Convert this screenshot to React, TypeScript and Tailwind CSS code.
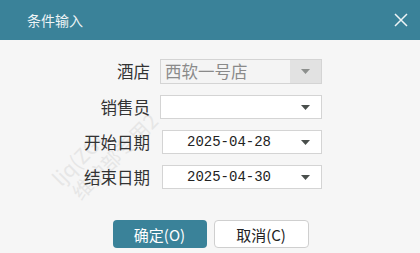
import React from "react";

const Arrow = () => (
  <svg width="9" height="5" viewBox="0 0 9 5" className="shrink-0">
    <path d="M0 0 H9 L4.5 5 Z" fill="#4a4f4c" />
  </svg>
);

const Label = ({ children }: { children: React.ReactNode }) => (
  <div className="w-[90px] text-right text-[16.5px] text-[#333] leading-none pr-[10px]">{children}</div>
);

export default function App() {
  const font = { fontFamily: '"Noto Sans CJK SC", "Noto Sans", sans-serif' };
  return (
    <div className="w-[420px] h-[253px] bg-[#f6f6f6] flex flex-col relative overflow-hidden" style={font}>
      <div className="h-[40px] bg-[#3a8299] flex items-center justify-between pl-[27px] pr-[12px] shrink-0">
        <span className="text-[14px] text-[#eef4f6] leading-none">条件输入</span>
        <svg width="14" height="14" viewBox="0 0 14 14">
          <path d="M1 1 L13 13 M13 1 L1 13" stroke="#eef4f6" strokeWidth="1.5" />
        </svg>
      </div>

      <div className="pointer-events-none absolute left-[64px] top-[166px] -rotate-45 origin-left text-[20px] leading-[24px] whitespace-nowrap text-[#e6e6e6]">
        <div>ljq(ZG)</div>
        <div className="pl-[4px]">维护部专用2</div>
      </div>

      <div className="relative flex flex-col pl-[70px] pt-[19px] gap-[11px]">
        <div className="flex items-center h-[25px]">
          <Label>酒店</Label>
          <div className="w-[162px] h-[25px] border border-[#d4d4d4] bg-[#f4f4f4] flex items-stretch">
            <div className="flex-1 flex items-center pl-[4px] text-[16.5px] text-[#8a8a8a] leading-none">西软一号店</div>
            <div className="w-[31px] bg-[#e2e2e2] flex items-center justify-center">
              <svg width="9" height="5" viewBox="0 0 9 5"><path d="M0 0 H9 L4.5 5 Z" fill="#8c8f8d" /></svg>
            </div>
          </div>
        </div>
        <div className="flex items-center h-[24px]">
          <Label>销售员</Label>
          <div className="w-[162px] h-[24px] border border-[#d4d4d4] bg-white flex items-center justify-end pr-[11px]">
            <Arrow />
          </div>
        </div>
        <div className="flex items-center h-[24px]">
          <Label>开始日期</Label>
          <div className="w-[160px] ml-[2px] h-[24px] border border-[#d4d4d4] bg-white flex items-center pl-[24px] pr-[11px]">
            <span className="flex-1 text-[14px] text-[#222]" style={{ fontFamily: '"Liberation Mono", monospace' }}>2025-04-28</span>
            <Arrow />
          </div>
        </div>
        <div className="flex items-center h-[24px]">
          <Label>结束日期</Label>
          <div className="w-[160px] ml-[2px] h-[24px] border border-[#d4d4d4] bg-white flex items-center pl-[24px] pr-[11px]">
            <span className="flex-1 text-[14px] text-[#222]" style={{ fontFamily: '"Liberation Mono", monospace' }}>2025-04-30</span>
            <Arrow />
          </div>
        </div>
      </div>

      <div className="flex justify-center gap-[7px] mt-[31px] pl-[1px]">
        <button className="w-[94px] h-[28px] rounded-[4px] bg-[#3a8299] text-white text-[15px] leading-none flex items-center justify-center">
          确定(O)
        </button>
        <button className="w-[95px] h-[28px] rounded-[4px] bg-white border border-[#cfcfcf] text-[#222] text-[15px] leading-none flex items-center justify-center">
          取消(C)
        </button>
      </div>
    </div>
  );
}
